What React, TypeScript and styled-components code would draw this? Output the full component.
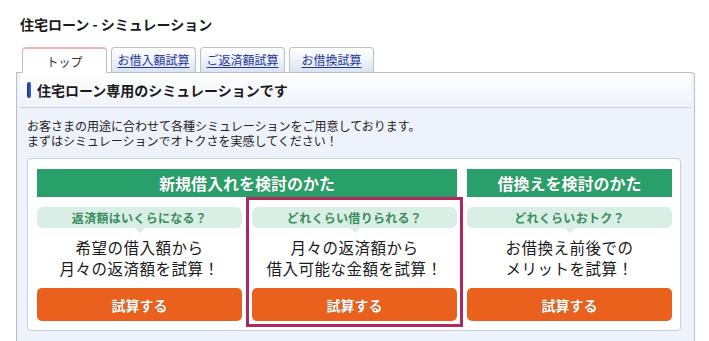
import styled, { createGlobalStyle, css } from 'styled-components';

const GlobalStyle = createGlobalStyle`
  html, body {
    margin: 0;
    padding: 0;
    background: #ffffff;
  }
  body {
    font-family: "Noto Sans CJK JP", "Noto Sans", sans-serif;
    color: #222;
  }
  * {
    box-sizing: border-box;
  }
`;

const tabs = [
  { label: 'トップ', active: true },
  { label: 'お借入額試算', active: false },
  { label: 'ご返済額試算', active: false },
  { label: 'お借換試算', active: false },
];

const columns = [
  {
    question: '返済額はいくらになる？',
    lines: ['希望の借入額から', '月々の返済額を試算！'],
    highlight: false,
  },
  {
    question: 'どれくらい借りられる？',
    lines: ['月々の返済額から', '借入可能な金額を試算！'],
    highlight: true,
  },
  {
    question: 'どれくらいおトク？',
    lines: ['お借換え前後での', 'メリットを試算！'],
    highlight: false,
  },
];

export default function App() {
  return (
    <Page>
      <GlobalStyle />
      <Title>住宅ローン - シミュレーション</Title>

      <TabBar>
        {tabs.map((tab) => (
          <Tab key={tab.label} $active={tab.active}>
            {tab.active ? tab.label : <TabLink href="#">{tab.label}</TabLink>}
          </Tab>
        ))}
      </TabBar>

      <Panel>
        <PanelHeader>
          <HeaderBar />
          住宅ローン専用のシミュレーションです
        </PanelHeader>

        <PanelBody>
          <Intro>
            お客さまの用途に合わせて各種シミュレーションをご用意しております。
            <br />
            まずはシミュレーションでオトクさを実感してください！
          </Intro>

          <SimBox>
            <GroupHead $span={2}>新規借入れを検討のかた</GroupHead>
            <GroupHead $span={1}>借換えを検討のかた</GroupHead>

            {columns.map((col) => (
              <SimColumn key={col.question} $highlight={col.highlight}>
                <Bubble>{col.question}</Bubble>
                <Lead>
                  {col.lines[0]}
                  <br />
                  {col.lines[1]}
                </Lead>
                <RunButton type="button">試算する</RunButton>
              </SimColumn>
            ))}
          </SimBox>
        </PanelBody>
      </Panel>
    </Page>
  );
}

const Page = styled.div`
  width: 709px;
  padding: 0 14px 0 16px;
`;

const Title = styled.h1`
  margin: 0;
  padding: 15px 0 0 4px;
  font-size: 14px;
  line-height: 18px;
  font-weight: 700;
  color: #1a1a1a;
`;

const TabBar = styled.div`
  display: flex;
  align-items: flex-end;
  gap: 4px;
  margin-top: 14px;
  padding-left: 6px;
  position: relative;
  z-index: 1;
`;

const Tab = styled.div<{ $active: boolean }>`
  width: 85px;
  height: 25px;
  display: flex;
  align-items: center;
  justify-content: center;
  font-size: 12px;
  line-height: 14px;
  border: 1px solid #b9bec8;
  border-bottom: none;
  border-radius: 4px 4px 0 0;
  background: linear-gradient(#ffffff 0%, #f1f5fb 45%, #d9e3f2 100%);

  ${(p) =>
    p.$active &&
    css`
      height: 26px;
      margin-bottom: -1px;
      color: #333;
      background: #ffffff;
      border-top: 2px solid #f3b3b3;
      padding-top: 1px;
    `}
`;

const TabLink = styled.a`
  color: #1e35a0;
  text-decoration: underline;
  text-underline-offset: 2px;
`;

const Panel = styled.div`
  border: 1px solid #b9bec8;
  border-bottom: none;
  border-radius: 0 4px 0 0;
  background: #eef2fa;
  padding-bottom: 40px;
`;

const PanelHeader = styled.div`
  display: flex;
  align-items: center;
  gap: 6px;
  height: 35px;
  margin: 0 3px;
  padding: 0 0 1px 7px;
  border-bottom: 1px solid #c9ced8;
  background: linear-gradient(#ffffff, #eef2fa);
  font-size: 14px;
  line-height: 18px;
  font-weight: 700;
  color: #1a1a1a;
`;

const HeaderBar = styled.span`
  width: 4px;
  height: 16px;
  border-radius: 2px;
  background: linear-gradient(90deg, #1b2c8c, #4660d0);
`;

const PanelBody = styled.div`
  padding: 10px 13px 0 10px;
`;

const Intro = styled.p`
  margin: 0;
  font-size: 12px;
  line-height: 15px;
  color: #222;
`;

const SimBox = styled.div`
  margin-top: 10px;
  display: grid;
  grid-template-columns: repeat(3, 205px);
  column-gap: 10px;
  padding: 10px 9px 9px;
  background: #ffffff;
  border: 1px solid #c9ced8;
  border-radius: 4px;
`;

const GroupHead = styled.div<{ $span: number }>`
  grid-column: span ${(p) => p.$span};
  height: 28px;
  display: flex;
  align-items: center;
  justify-content: center;
  background: #29a06a;
  color: #ffffff;
  font-size: 16px;
  line-height: 20px;
  font-weight: 700;
  text-shadow: 0 0 1px rgba(0, 0, 0, 0.25);
`;

const SimColumn = styled.div<{ $highlight: boolean }>`
  position: relative;
  display: flex;
  flex-direction: column;
  padding-top: 10px;

  ${(p) =>
    p.$highlight &&
    css`
      &::after {
        content: '';
        position: absolute;
        top: 0;
        left: -6px;
        right: -6px;
        bottom: -6px;
        border: 3px solid #b0285e;
        pointer-events: none;
      }
    `}
`;

const Bubble = styled.div`
  position: relative;
  height: 21px;
  display: flex;
  align-items: center;
  justify-content: center;
  border-radius: 6px;
  background: #d9efe6;
  color: #3a8d5d;
  font-size: 12px;
  line-height: 14px;
  font-weight: 700;
  letter-spacing: 0.3px;

  &::after {
    content: '';
    position: absolute;
    left: 50%;
    top: 100%;
    margin-left: -5px;
    border: 5px solid transparent;
    border-top-color: #d9efe6;
    border-bottom: none;
  }
`;

const Lead = styled.p`
  margin: 9px 0 0;
  text-align: center;
  font-size: 15.5px;
  line-height: 21px;
  letter-spacing: 0.5px;
  color: #1a1a1a;
`;

const RunButton = styled.button`
  margin-top: 9px;
  height: 33px;
  border: none;
  border-radius: 5px;
  background: #e9611c;
  color: #ffffff;
  font-family: inherit;
  font-size: 14px;
  font-weight: 700;
  text-shadow: 0 0 1px rgba(0, 0, 0, 0.3);
  cursor: pointer;
`;
